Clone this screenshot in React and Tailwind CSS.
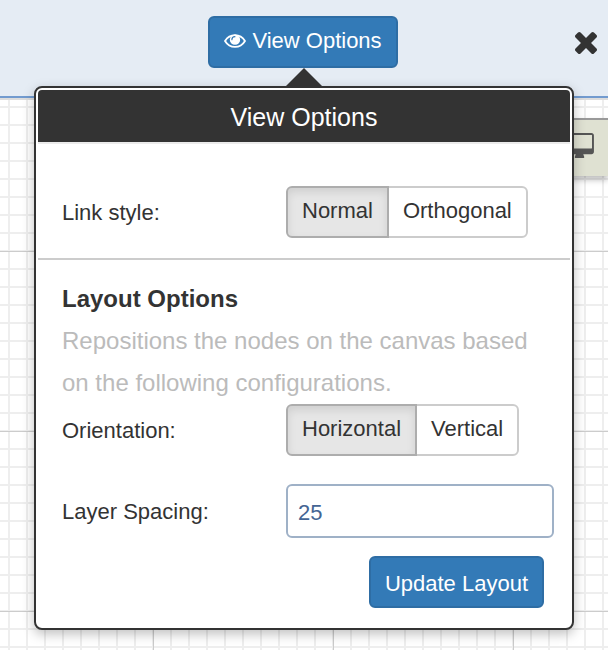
import { useState } from 'react';

const LINK_STYLES = ['Normal', 'Orthogonal'];
const ORIENTATIONS = ['Horizontal', 'Vertical'];

function EyeIcon() {
  return (
    <svg viewBox="0 384 1792 1152" className="w-[22px] h-[14px] fill-current" aria-hidden="true">
      {/* Outline of the lids */}
      <path
        d="M74 960Q370 470 896 470T1718 960Q1422 1450 896 1450T74 960Z"
        fill="none"
        stroke="currentColor"
        strokeWidth="150"
        strokeLinejoin="round"
      />
      {/* Iris with its highlight */}
      <circle cx="896" cy="850" r="425" />
      <path
        d="M640 850Q640 600 890 600"
        fill="none"
        stroke="#337ab7"
        strokeWidth="96"
        strokeLinecap="round"
      />
    </svg>
  );
}

function CloseIcon() {
  return (
    <svg viewBox="302 366 1188 1188" className="size-[22px] fill-current" aria-hidden="true">
      <path d="M1490 1322q0 40-28 68l-136 136q-28 28-68 28t-68-28l-294-294-294 294q-28 28-68 28t-68-28l-136-136q-28-28-28-68t28-68l294-294-294-294q-28-28-28-68t28-68l136-136q28-28 68-28t68 28l294 294 294-294q28-28 68-28t68 28l136 136q28 28 28 68t-28 68l-294 294 294 294q28 28 28 68z" />
    </svg>
  );
}

function DesktopIcon() {
  return (
    <svg viewBox="-64 0 1920 1664" className="w-[29px] h-[25px] fill-current" aria-hidden="true">
      <path d="M1728 992v-832q0-13-9.5-22.5t-22.5-9.5h-1600q-13 0-22.5 9.5t-9.5 22.5v832q0 13 9.5 22.5t22.5 9.5h1600q13 0 22.5-9.5t9.5-22.5zm128-832v1088q0 66-47 113t-113 47h-544q0 37 16 77.5t32 71 16 43.5q0 26-19 45t-45 19h-512q-26 0-45-19t-19-45q0-14 16-44t32-70 16-78h-544q-66 0-113-47t-47-113v-1088q0-66 47-113t113-47h1600q66 0 113 47t47 113z" />
    </svg>
  );
}

function ButtonGroup({ labelId, options, value, onChange }) {
  return (
    <div role="group" aria-labelledby={labelId} className="flex">
      {options.map((option) => (
        <button
          key={option}
          type="button"
          aria-pressed={option === value}
          onClick={() => onChange(option)}
          className={`h-[52px] border-2 px-[14px] pb-[3px] first:rounded-l-md last:-ml-[2px] last:rounded-r-md ${
            option === value
              ? 'relative z-10 border-[#adadad] bg-[#e6e6e6] shadow-[inset_0_4px_8px_rgba(0,0,0,0.1)]'
              : 'border-[#ccc] bg-white'
          }`}
        >
          {option}
        </button>
      ))}
    </div>
  );
}

function ViewOptionsPopover() {
  const [linkStyle, setLinkStyle] = useState('Normal');
  const [orientation, setOrientation] = useState('Horizontal');
  const [spacing, setSpacing] = useState('25');

  return (
    <section className="absolute inset-x-[34px] top-[86px] z-20 rounded-lg border-2 border-[#333] bg-white p-[2px] shadow-[0_4px_12px_rgba(0,0,0,0.25)]">
      {/* Arrow */}
      <div className="absolute -top-[20px] left-1/2 h-[18px] w-[36px] -translate-x-1/2 bg-[#333] [clip-path:polygon(50%_0,100%_100%,0_100%)]" />

      <h2 className="h-[54px] rounded-t-sm border-b-2 border-[#ebebeb] bg-[#333] bg-clip-padding text-center text-[25px] leading-[54px] text-white">
        View Options
      </h2>

      <div className="grid grid-cols-[224px_1fr] items-center border-b-2 border-[#ccc] pt-[42px] pr-4 pb-5 pl-6">
        <span id="link-style">Link style:</span>
        <ButtonGroup
          labelId="link-style"
          options={LINK_STYLES}
          value={linkStyle}
          onChange={setLinkStyle}
        />
      </div>

      <div className="pt-[18px] pr-4 pb-[18px] pl-6">
        <h3 className="text-2xl leading-[42px] font-bold">Layout Options</h3>
        <p className="text-2xl leading-[42px] text-[#bbb]">
          Repositions the nodes on the canvas based on the following configurations.
        </p>

        <div className="grid grid-cols-[224px_1fr] items-center gap-y-7">
          <span id="orientation">Orientation:</span>
          <ButtonGroup
            labelId="orientation"
            options={ORIENTATIONS}
            value={orientation}
            onChange={setOrientation}
          />
          <label htmlFor="layer-spacing">Layer Spacing:</label>
          <input
            id="layer-spacing"
            type="text"
            value={spacing}
            onChange={(e) => setSpacing(e.target.value)}
            className="h-[54px] w-full rounded-md border-2 border-[#9fb1c7] bg-white px-[10px] pt-1 text-[#446594]"
          />
        </div>

        <div className="mt-[18px] flex justify-end pr-[10px]">
          <button
            type="button"
            className="h-[52px] rounded-md border-2 border-[#2e6da4] bg-[#337ab7] px-[14px] pt-[2px] text-white"
          >
            Update Layout
          </button>
        </div>
      </div>
    </section>
  );
}

export default function App() {
  return (
    <div className="relative flex min-h-screen flex-col overflow-hidden bg-white font-['Liberation_Sans',Arial,sans-serif] text-[22px] text-[#333]">
      <header className="relative flex h-[98px] items-start justify-center border-b-2 border-[#729bcf] bg-[#e5ecf4] pt-4 pr-[2px]">
        <button
          type="button"
          aria-expanded="true"
          className="flex h-[52px] items-center gap-[6px] rounded-md border-2 border-[#2e6da4] bg-[#337ab7] px-[14px] pb-[3px] text-white"
        >
          <EyeIcon />
          View Options
        </button>
        <button type="button" aria-label="Close" className="absolute top-8 right-[11px]">
          <CloseIcon />
        </button>
      </header>

      {/* Canvas: light lines every 18px, darker ones every 180px */}
      <main className="relative flex-1 border-t-2 border-[#ddd] bg-[linear-gradient(to_right,#ccc_1px,transparent_1px),linear-gradient(to_bottom,#ccc_1px,transparent_1px),linear-gradient(to_right,#eee_2px,transparent_2px),linear-gradient(to_bottom,#eee_2px,transparent_2px)] bg-[size:180px_180px,180px_180px,18px_18px,18px_18px] bg-[position:153px_0,0_151px,8px_0,0_6px]">
        <button
          type="button"
          aria-label="Full screen"
          className="absolute top-[18px] right-0 flex h-[58px] w-[58px] items-start justify-end border-t-2 border-[#999] bg-[#dfe1d2] pt-[13px] pr-[14px] text-[#555] shadow-[0_4px_6px_rgba(0,0,0,0.25)]"
        >
          <DesktopIcon />
        </button>
      </main>

      <ViewOptionsPopover />
    </div>
  );
}
